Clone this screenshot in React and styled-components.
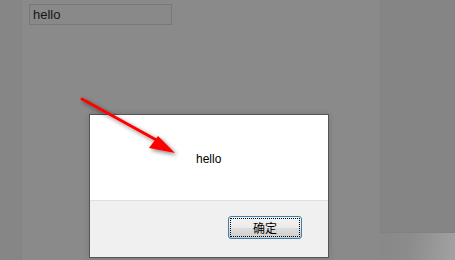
import React from "react";
import styled, { createGlobalStyle } from "styled-components";

const Global = createGlobalStyle`
  html, body { margin: 0; padding: 0; }
  body { width: 455px; height: 260px; overflow: hidden; font-family: Arial, "Liberation Sans", sans-serif; }
`;

const Page = styled.div`
  position: relative;
  display: flex;
  width: 455px;
  height: 260px;
  background: #868686;
  overflow: hidden;
`;

const Strip = styled.div`
  width: 21px;
  flex: none;
  background: #868686;
`;

const Panel = styled.div`
  width: 359px;
  flex: none;
  background: #8a8a8a;
  border-left: 1px solid #828282;
  padding: 4px 7px;
  box-sizing: border-box;
`;

const Input = styled.div`
  width: 143px;
  height: 21px;
  box-sizing: border-box;
  border: 1px solid #787878;
  background: #898989;
  color: #151515;
  font-size: 13px;
  line-height: 19px;
  padding-left: 3px;
  font-family: Arial, "Liberation Sans", sans-serif;
`;

const RightCol = styled.div`
  flex: 1;
  display: flex;
  flex-direction: column;
`;

const RightBlock = styled.div`
  height: 233px;
  background: #858585;
  border-left: 1px solid #828282;
  border-bottom: 1px solid #828282;
  box-sizing: border-box;
`;

const RightFoot = styled.div`
  flex: 1;
  background: linear-gradient(100deg, #888 0%, #8c8c8c 40%, #a2a2a2 100%);
`;

const Dialog = styled.div`
  position: absolute;
  left: 89px;
  top: 114px;
  width: 240px;
  height: 144px;
  box-sizing: border-box;
  border: 1px solid #555;
  background: #fff;
  display: flex;
  flex-direction: column;
  box-shadow: 0 0 6px rgba(0,0,0,0.15);
`;

const Body = styled.div`
  height: 85px;
  display: flex;
  align-items: center;
  padding-left: 106px;
  padding-top: 2px;
  box-sizing: border-box;
  font-size: 12px;
  color: #000;
`;

const Footer = styled.div`
  flex: 1;
  background: #f0f0f0;
  border-top: 1px solid #dfdfdf;
  display: flex;
  justify-content: flex-end;
  align-items: flex-start;
  padding: 15px 26px 0 0;
`;

const Button = styled.button`
  width: 74px;
  height: 23px;
  box-sizing: border-box;
  border: 1px solid #3c7fb1;
  border-radius: 3px;
  background: linear-gradient(#f2f2f2, #ebebeb 50%, #dddddd 51%, #cfcfcf);
  outline: 1px dotted #000;
  outline-offset: -3px;
  font-family: "Noto Sans CJK SC", sans-serif;
  font-size: 12px;
  color: #000;
  padding: 0;
  line-height: 20px;
`;

const Arrow = styled.svg`
  position: absolute;
  left: 0;
  top: 0;
  pointer-events: none;
`;

export default function App() {
  return (
    <>
      <Global />
      <Page>
        <Strip />
        <Panel>
          <Input>hello</Input>
        </Panel>
        <RightCol>
          <RightBlock />
          <RightFoot />
        </RightCol>
        <Dialog>
          <Body>hello</Body>
          <Footer>
            <Button>确定</Button>
          </Footer>
        </Dialog>
        <Arrow width="455" height="260" viewBox="0 0 455 260">
          <defs>
            <filter id="sh" x="-20%" y="-20%" width="140%" height="140%">
              <feGaussianBlur in="SourceAlpha" stdDeviation="2" />
              <feOffset dx="2" dy="2" />
              <feComponentTransfer><feFuncA type="linear" slope="0.5" /></feComponentTransfer>
              <feMerge><feMergeNode /><feMergeNode in="SourceGraphic" /></feMerge>
            </filter>
          </defs>
          <g filter="url(#sh)">
            <line x1="82" y1="99" x2="160" y2="142" stroke="#f00" strokeWidth="3" strokeLinecap="round" />
            <polygon points="175,153 149,148 158,136" fill="#f00" />
          </g>
        </Arrow>
      </Page>
    </>
  );
}
